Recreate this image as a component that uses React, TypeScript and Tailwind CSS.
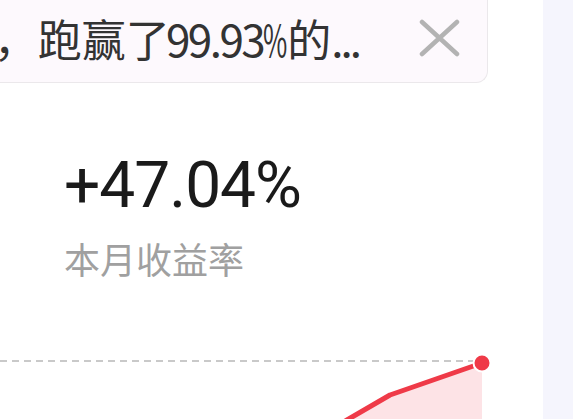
const cjk = { fontFamily: '"Noto Sans CJK SC", "Noto Sans", sans-serif' }

function Close() {
  return (
    <svg width="41" height="38" viewBox="0 0 41 38" className="ml-[60px] shrink-0">
      <path d="M3 3 L38 35 M38 3 L3 35" stroke="#b3b3b3" strokeWidth="4.5" strokeLinecap="round" />
    </svg>
  )
}

function Banner() {
  return (
    <div className="-mt-[20px] flex h-[103px] w-[488px] shrink-0 items-center justify-end overflow-hidden rounded-br-[12px] border-r border-b border-[#ebe8eb] bg-[#fdf9fd] pt-[20px] pb-[7px] pr-[27px]">
      <span className="whitespace-nowrap text-[44px] leading-none text-[#333333]" style={cjk}>
        元，跑赢了<span className="-ml-[4px] tracking-[-2.5px]">99.93</span>
        <span className="inline-block w-[24px] origin-left scale-x-[0.6]">%</span>的<span className="tracking-[-3px]">...</span>
      </span>
      <Close />
    </div>
  )
}

function Chart() {
  return (
    <svg width="543" height="80" viewBox="0 0 543 80" className="block">
      <line x1="0" y1="16" x2="476" y2="16" stroke="#c9c9c9" strokeWidth="2" strokeDasharray="7 5" />
      <path d="M330 80 L347 75 L390 50 L482 18 L482 80 Z" fill="#fde3e6" />
      <path d="M330 85 L347 75 L390 50 L482 18" fill="none" stroke="#ef3a48" strokeWidth="5" strokeLinejoin="round" />
      <circle cx="482" cy="18" r="8.5" fill="#ef3a48" stroke="#ffffff" strokeWidth="2" />
    </svg>
  )
}

export default function App() {
  return (
    <div className="flex h-[419px] w-[573px] overflow-hidden bg-white">
      <div className="flex w-[543px] shrink-0 flex-col">
        <Banner />
        <div className="shrink-0 pl-[64px] pt-[71px]">
          <div className="text-[64px] leading-none tracking-[-1px] text-[#1a1a1a]" style={{ fontFamily: 'Roboto, "Liberation Sans", sans-serif' }}>
            +47.04%
          </div>
          <div className="mt-[22px] text-[36px] leading-none text-[#a0a0a0]" style={cjk}>
            本月收益率
          </div>
        </div>
        <div className="mt-[69px] shrink-0">
          <Chart />
        </div>
      </div>
      <div className="flex-1 bg-[#f5f5fd]" />
    </div>
  )
}
